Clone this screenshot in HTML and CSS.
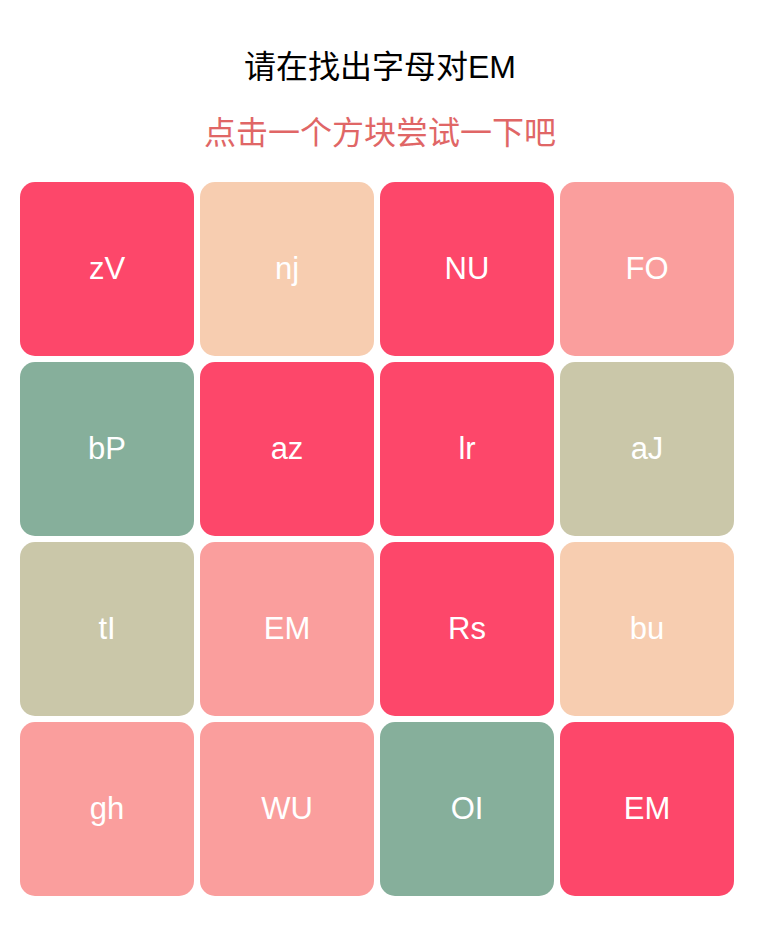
FILE: index.html
```html
<!DOCTYPE html>
<html lang="zh">
<head>
<meta charset="utf-8">
<link rel="stylesheet" href="styles.css">
</head>
<body>
<div class="page">
  <h1 class="title">请在找出字母对EM</h1>
  <p class="hint">点击一个方块尝试一下吧</p>
  <div class="grid">
    <div class="tile red">zV</div>
    <div class="tile peach">nj</div>
    <div class="tile red">NU</div>
    <div class="tile pink">FO</div>
    <div class="tile green">bP</div>
    <div class="tile red">az</div>
    <div class="tile red">lr</div>
    <div class="tile khaki">aJ</div>
    <div class="tile khaki">tI</div>
    <div class="tile pink">EM</div>
    <div class="tile red">Rs</div>
    <div class="tile peach">bu</div>
    <div class="tile pink">gh</div>
    <div class="tile pink">WU</div>
    <div class="tile green">OI</div>
    <div class="tile red">EM</div>
  </div>
</div>
</body>
</html>
```
FILE: styles.css
```css
html, body {
  margin: 0;
  padding: 0;
  background: #ffffff;
}
.page {
  width: 760px;
  padding-top: 51px;
  font-family: "Liberation Sans", "Noto Sans CJK SC", sans-serif;
}
.title {
  margin: 0;
  font-size: 32px;
  font-weight: normal;
  line-height: 32px;
  text-align: center;
  color: #000000;
}
.hint {
  margin: 34px 0 0 0;
  font-size: 32px;
  line-height: 32px;
  text-align: center;
  color: #e06666;
}
.grid {
  margin-top: 33px;
  padding-left: 20px;
  display: grid;
  grid-template-columns: repeat(4, 174px);
  grid-auto-rows: 174px;
  gap: 6px;
}
.tile {
  border-radius: 15px;
  display: flex;
  align-items: center;
  justify-content: center;
  color: #ffffff;
  font-size: 31px;
}
.red { background: #fd476a; }
.peach { background: #f7cdb0; }
.pink { background: #fa9e9d; }
.green { background: #86af9b; }
.khaki { background: #cac7a9; }
```
